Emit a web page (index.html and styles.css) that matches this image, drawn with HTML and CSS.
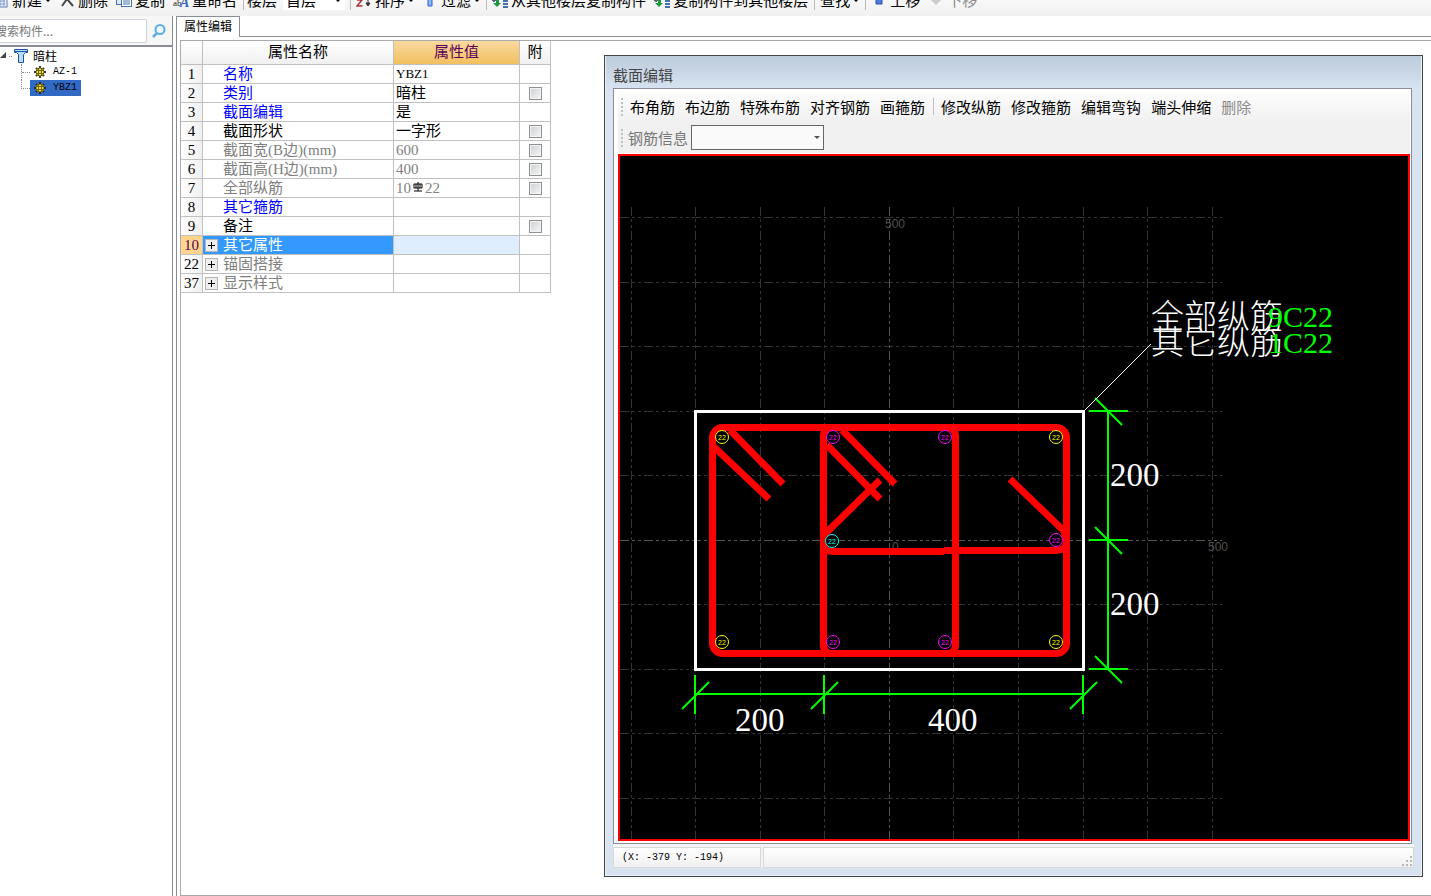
FILE: index.html
```html
<!DOCTYPE html>
<html lang="zh-CN">
<head>
  <meta charset="UTF-8" />
  <title>属性编辑</title>
  <link rel="stylesheet" href="styles.css">
</head>
<body>
  <div class="toolbar">
    <button class="tool">
      <svg class="icon" viewBox="0 0 16 16"><rect x="1" y="0" width="13" height="15" fill="#eaf1fb" stroke="#5b7fb5"/><path d="M3 5h9M3 9h9M3 12h9M7 3v11M11 3v11" stroke="#7b9acb"/></svg>
      新建<span class="arrow"></span>
    </button>
    <button class="tool">
      <svg class="icon" viewBox="0 0 16 16"><path d="M6 3l2 5M11 3L8 8M8 7l-5 7M8 7l6 7" stroke="#4a4a4a" stroke-width="2" fill="none"/></svg>
      删除
    </button>
    <button class="tool">
      <svg class="icon" viewBox="0 0 16 16"><rect x="0.500" y="1.500" width="9" height="11" fill="#dce9fa" stroke="#4772b3"/><rect x="5.500" y="4.500" width="10" height="10" fill="#fff" stroke="#4772b3"/><path d="M7 8h7M7 10h7M7 12h7" stroke="#4772b3"/></svg>
      复制
    </button>
    <button class="tool">
      <svg class="icon" viewBox="0 0 16 16"><text x="0" y="14" font-size="9" font-family="Liberation Serif" fill="#222">ab</text><text x="7" y="15" font-size="14" font-style="italic" font-weight="bold" font-family="Liberation Serif" fill="#3a66c4">A</text></svg>
      重命名
    </button>
    <span class="sep"></span>
    <label class="floor" for="floor">楼层</label>
    <span class="floor-box">
      <select id="floor"><option>首层</option></select><span class="arrow"></span>
    </span>
    <span class="sep"></span>
    <button class="tool">
      <svg class="icon" viewBox="0 0 16 16"><path d="M1 8h5l-5 6h5.500" stroke="#a33" stroke-width="1.500" fill="none"/><path d="M12 2v11M10 11l2 3 2-3z" stroke="#333" fill="#333"/></svg>
      排序<span class="arrow"></span>
    </button>
    <button class="tool">
      <svg class="icon" viewBox="0 0 16 16"><path d="M1 1h14l-5 5v8H6V6z" fill="#8db8f5" stroke="#2d5fd0"/></svg>
      过滤<span class="arrow"></span>
    </button>
    <span class="sep"></span>
    <button class="tool">
      <svg class="icon" viewBox="0 0 16 16"><path d="M0 8h7M2 4v6" stroke="#567" stroke-width="2"/><path d="M4 8h3v3h2l-4 4-4-4h3z" fill="#1a9a3c"/><path d="M11 3h5M11 6h5M11 9h5M11 12h5M11 15h5" stroke="#4470b0" stroke-width="2"/></svg>
      从其他楼层复制构件
    </button>
    <button class="tool">
      <svg class="icon" viewBox="0 0 16 16"><path d="M0 8h7M2 4v6" stroke="#567" stroke-width="2"/><path d="M4 8h3v3h2l-4 4-4-4h3z" fill="#1a9a3c"/><path d="M11 3h5M11 6h5M11 9h5M11 12h5M11 15h5" stroke="#4470b0" stroke-width="2"/></svg>
      复制构件到其他楼层
    </button>
    <span class="sep"></span>
    <button class="tool">查找<span class="arrow"></span></button>
    <span class="sep"></span>
    <button class="tool">
      <svg class="icon" viewBox="0 0 16 16"><path d="M8 0l6 6h-3v6H5V6H2z" fill="#4c7de0" stroke="#2b4fa8"/></svg>
      上移
    </button>
    <button class="tool" disabled>
      <svg class="icon" viewBox="0 0 16 16"><path d="M5 2h6v5h3l-6 6-6-6h3z" fill="#ccc"/></svg>
      下移
    </button>
  </div>

  <div class="workspace">
    <aside class="sidebar">
      <div class="search">
        <input type="text" placeholder="搜索构件..." aria-label="搜索构件">
        <button class="search-btn" aria-label="搜索">
          <svg width="14" height="14" viewBox="0 0 14 14" fill="none"><circle cx="8" cy="5.500" r="4.500" fill="#eef7fd" stroke="#5aaee6" stroke-width="2"/><path d="M5 9l-4 4" stroke="#5aaee6" stroke-width="2.500"/></svg>
        </button>
      </div>
      <div class="tree">
        <div class="tree-root">
          <svg width="33" height="16" viewBox="0 0 33 16"><path d="M6 4v6H0z" fill="#444"/><path d="M9 8.500h4" stroke="#888" stroke-dasharray="1 1"/><path d="M14.500 1.500h13v3h-2l-2 2v8h-5v-8l-2-2h-2z" fill="#b9dcfb" stroke="#1f55a8"/><path d="M15 3.500h12" stroke="#1f55a8"/></svg>
          暗柱
        </div>
        <ul>
          <li><a href="#az1">
            <svg width="12" height="12" viewBox="0 0 12 12"><path d="M6 0v12M0 6h12M2 2l8 8M10 2l-8 8" stroke="#333" stroke-width="2"/><circle cx="6" cy="6" r="4" fill="#fbe93a" stroke="#6b6312"/><path d="M4.500 3v6M7.500 3v6M3 4.500h6M3 7.500h6" stroke="#6b6312"/></svg>
            <span>AZ-1</span></a></li>
          <li><a href="#ybz1" class="selected">
            <svg width="12" height="12" viewBox="0 0 12 12"><path d="M6 0v12M0 6h12M2 2l8 8M10 2l-8 8" stroke="#222" stroke-width="2"/><circle cx="6" cy="6" r="4" fill="#fbe93a" stroke="#6b6312"/><path d="M4.500 3v6M7.500 3v6M3 4.500h6M3 7.500h6" stroke="#6b6312"/></svg>
            <span>YBZ1</span></a></li>
        </ul>
      </div>
    </aside>

    <main class="main">
      <div class="tabs"><button class="tab">属性编辑</button></div>
      <div class="panel">
        <table class="props">
          <thead>
            <tr><th class="num"></th><th class="name">属性名称</th><th class="value active">属性值</th><th class="extra">附</th></tr>
          </thead>
          <tbody>
            <tr class="key"><th>1</th><td>名称</td><td class="code">YBZ1</td><td></td></tr>
            <tr class="key"><th>2</th><td>类别</td><td>暗柱</td><td><input type="checkbox" aria-label="附加 类别"></td></tr>
            <tr class="key"><th>3</th><td>截面编辑</td><td>是</td><td></td></tr>
            <tr><th>4</th><td>截面形状</td><td>一字形</td><td><input type="checkbox" aria-label="附加 截面形状"></td></tr>
            <tr class="dim"><th>5</th><td>截面宽(B边)(mm)</td><td>600</td><td><input type="checkbox" aria-label="附加 截面宽"></td></tr>
            <tr class="dim"><th>6</th><td>截面高(H边)(mm)</td><td>400</td><td><input type="checkbox" aria-label="附加 截面高"></td></tr>
            <tr class="dim"><th>7</th><td>全部纵筋</td><td>10<svg class="rebar" width="14" height="12" viewBox="0 0 14 12"><path d="M7 1v9M3 10h8M3 3h8v4H3zM5 3v4M9 3v4" stroke="#000" fill="none"/></svg>22</td><td><input type="checkbox" aria-label="附加 全部纵筋"></td></tr>
            <tr class="key"><th>8</th><td>其它箍筋</td><td></td><td></td></tr>
            <tr><th>9</th><td>备注</td><td></td><td><input type="checkbox" aria-label="附加 备注"></td></tr>
            <tr class="group current"><th>10</th><td><button class="plus" aria-label="展开"></button>其它属性</td><td></td><td></td></tr>
            <tr class="group dim"><th>22</th><td><button class="plus" aria-label="展开"></button>锚固搭接</td><td></td><td></td></tr>
            <tr class="group dim"><th>37</th><td><button class="plus" aria-label="展开"></button>显示样式</td><td></td><td></td></tr>
          </tbody>
        </table>

        <section class="window">
          <h1 class="title">截面编辑</h1>
          <div class="frame">
            <div class="bar">
              <span class="grip"></span>
              <button>布角筋</button>
              <button>布边筋</button>
              <button>特殊布筋</button>
              <button>对齐钢筋</button>
              <button>画箍筋</button>
              <span class="bar-sep"></span>
              <button>修改纵筋</button>
              <button>修改箍筋</button>
              <button>编辑弯钩</button>
              <button>端头伸缩</button>
              <button disabled>删除</button>
            </div>
            <div class="bar bar-info">
              <span class="grip"></span>
              <label for="rebarInfo">钢筋信息</label>
              <span class="info-box"><select id="rebarInfo" disabled><option></option></select><span class="arrow"></span></span>
            </div>
            <div class="canvas">
              <svg width="100%" height="100%">
                <!-- origin is the centre of the section -->
                <g transform="translate(269 384)">
                  <g class="grid">
                    <path d="M-257.500-333V300M-193.500-333V300M-128.500-333V300M-64.500-333V300M64.500-333V300M129.500-333V300M194.500-333V300M258.500-333V300M323.500-333V300"/>
                    <path d="M-269-322.500H333M-269-257.500H333M-269-193.500H333M-269-128.500H333M-269-64.500H333M-269 64.500H333M-269 129.500H333M-269 193.500H333M-269 258.500H333"/>
                    <path class="axis" d="M0.500-333V300M-269 0.500H333"/>
                  </g>
                  <g class="axis-label">
                    <text x="-4" y="-312">500</text>
                    <text x="3" y="11">0</text>
                    <text x="319" y="11">500</text>
                  </g>

                  <rect class="column" x="-193.500" y="-128.500" width="388" height="258"/>

                  <g class="stirrup">
                    <rect x="-176.500" y="-112.500" width="354" height="226" rx="10"/>
                    <rect x="-65.500" y="-112.500" width="132" height="226" rx="8"/>
                    <path d="M-176-94l56 53M-159-110l53 54"/>
                    <path d="M-62-95l53 54M-47-110l53 54"/>
                    <path d="M-9-60L-64-6Q-70 11.500-56 11.500H55"/>
                    <path d="M55 10.500H167Q178 10 177.500 0L175-9l-54-52"/>
                  </g>

                  <g class="bars yellow">
                    <circle cx="-167" cy="-103" r="6.500"/><text x="-167" y="-100">22</text>
                    <circle cx="167" cy="-103" r="6.500"/><text x="167" y="-100">22</text>
                    <circle cx="-167" cy="102" r="6.500"/><text x="-167" y="105">22</text>
                    <circle cx="167" cy="102" r="6.500"/><text x="167" y="105">22</text>
                  </g>
                  <g class="bars magenta">
                    <circle cx="-56" cy="-103" r="6.500"/><text x="-56" y="-100">22</text>
                    <circle cx="56" cy="-103" r="6.500"/><text x="56" y="-100">22</text>
                    <circle cx="167" cy="0" r="6.500"/><text x="167" y="3">22</text>
                    <circle cx="-56" cy="102" r="6.500"/><text x="-56" y="105">22</text>
                    <circle cx="56" cy="102" r="6.500"/><text x="56" y="105">22</text>
                  </g>
                  <g class="bars cyan">
                    <circle cx="-57" cy="1" r="6.500"/><text x="-57" y="4">22</text>
                  </g>

                  <g class="dims">
                    <path d="M219-129V129M200-129h39M200 0h39M200 129h39"/>
                    <path d="M206-142l27 27M206-13l27 27M206 116l27 27"/>
                    <path d="M-194 154H194M-194 135v39M-65 135v39M194 135v39"/>
                    <path d="M-207 169l27-27M-78 169l27-27M181 169l27-27"/>
                  </g>
                  <g class="dim-text">
                    <text x="221" y="-54">200</text>
                    <text x="221" y="75">200</text>
                    <text x="-154" y="191">200</text>
                    <text x="39" y="191">400</text>
                  </g>

                  <path class="leader" d="M195.500-129.500L262-196"/>
                  <g class="note">
                    <text x="262" y="-212">全部纵筋</text>
                    <text x="262" y="-186">其它纵筋</text>
                  </g>
                  <g class="note-value">
                    <text x="379" y="-213">9C22</text>
                    <text x="379" y="-187">1C22</text>
                  </g>
                </g>
              </svg>
            </div>
          </div>
          <footer class="status">
            <span class="coords">(X: -379 Y: -194)</span>
            <span class="rest"><svg width="11" height="11" viewBox="0 0 11 11"><path d="M8 0h2v2H8zM4 4h2v2H4zM8 4h2v2H8zM0 8h2v2H0zM4 8h2v2H4zM8 8h2v2H8z" fill="#b8b8b8"/></svg></span>
          </footer>
        </section>
      </div>
    </main>
  </div>
</body>
</html>
```

FILE: styles.css
```css
*, *::before {
  box-sizing: border-box;
}

body {
  margin: 0;
  height: 100vh;
  display: flex;
  flex-direction: column;
  overflow: hidden;
  background: #fff;
  color: #000;
  font-family: "Noto Sans CJK SC", sans-serif;
  font-size: 15px;
}

button, select, input {
  font: inherit;
  color: inherit;
  margin: 0;
  padding: 0;
  border: none;
  border-radius: 0;
  background: none;
}

button:disabled {
  color: #8a8a8a;
}

svg {
  display: block;
  flex: none;
}

.arrow {
  flex: none;
  border: 3px solid transparent;
  border-top-color: #000;
  border-bottom: none;
}

/* top toolbar, scrolled partly out of view */
.toolbar {
  height: 16px;
  flex: none;
  display: flex;
  align-items: flex-end;
  gap: 2px;
  margin-left: -10px;
  padding-bottom: 6px;
  overflow: hidden;
  background: linear-gradient(#f8f8f8, #f0f0f0);
  line-height: 20px;
  white-space: nowrap;
}

.tool {
  display: flex;
  align-items: center;
  gap: 3px;
  padding: 0 3px;
}

.icon {
  width: 16px;
  height: 16px;
}

.sep {
  width: 1px;
  height: 20px;
  flex: none;
  margin-left: 1px;
  background: #bbb;
}

.floor {
  margin-left: 1px;
}

.floor-box {
  display: flex;
  align-items: center;
  width: 62px;
  margin: 0 2px 0 4px;
  padding-right: 4px;
  background: #fff;
}

.floor-box select {
  flex: 1;
  appearance: none;
  padding-left: 3px;
  line-height: 20px;
}

.workspace {
  flex: 1;
  display: flex;
  min-height: 0;
}

/* left tree */
.sidebar {
  width: 173px;
  flex: none;
  display: flex;
  flex-direction: column;
  border-right: 1px solid #8c8c99;
}

.search {
  display: flex;
  align-items: center;
  height: 31px;
  background: #f6f6f6;
  border-bottom: 2px solid #8c8c99;
}

.search input {
  width: 153px;
  height: 24px;
  margin-left: -6px;
  background: #fff;
  border: 1px solid #cdd3da;
  border-radius: 2px;
  font-size: 12px;
}

.search input::placeholder {
  color: #777;
}

.search-btn {
  padding: 0 5px;
}

.tree {
  font-size: 12px;
  line-height: 16px;
  padding-top: 1px;
}

.tree-root {
  display: flex;
}

.tree ul {
  list-style: none;
  margin: 0;
  padding: 0 0 0 21px;
}

.tree li {
  display: flex;
  height: 16px;
}

.tree li::before {
  content: "";
  width: 9px;
  height: 9px;
  border-left: 1px dotted #888;
  border-bottom: 1px dotted #888;
}

.tree li:first-child {
  border-left: 1px dotted #888;
}

.tree li:first-child::before {
  width: 8px;
  border-left: none;
}

.tree a {
  display: flex;
  align-items: center;
  gap: 7px;
  padding: 0 4px;
  color: #000;
  text-decoration: none;
  font-family: "Liberation Mono", monospace;
  font-size: 10px;
}

.tree .selected {
  background: #316ac5;
}

/* property editor */
.main {
  flex: 1;
  min-width: 0;
  display: flex;
  flex-direction: column;
  margin-left: 3px;
  border-left: 1px solid #8c8c99;
}

.tabs {
  height: 21px;
  display: flex;
  border-bottom: 1px solid #8c8c99;
}

.tab {
  height: 21px;
  padding: 0 7px 2px;
  background: #fff;
  border-top: 1px solid #8c8c99;
  border-right: 1px solid #8c8c99;
  font-size: 12px;
  line-height: 18px;
}

.panel {
  flex: 1;
  min-height: 0;
  display: flex;
  align-items: flex-start;
  margin: 3px 0 0 3px;
  border: 1px solid #aaa;
  border-right: none;
}

.props {
  width: 370px;
  flex: none;
  table-layout: fixed;
  border-collapse: separate;
  border-spacing: 0;
  font-family: "Liberation Serif", "Noto Sans CJK SC", serif;
  line-height: 18px;
}

.props th, .props td {
  height: 19px;
  padding: 0;
  border-right: 1px solid #c0c0c0;
  border-bottom: 1px solid #c0c0c0;
  font-weight: normal;
  text-align: left;
  white-space: nowrap;
}

.props thead th {
  height: 24px;
  padding-bottom: 2px;
  text-align: center;
  background: linear-gradient(#fff, #f0f0f0);
}

.props .num { width: 22px; }
.props .name { width: 191px; }
.props .value { width: 126px; }
.props .extra { width: 31px; }

.props thead .active {
  background: linear-gradient(#f9d99f, #f1c05f);
  color: #5a005a;
}

.props tbody th {
  text-align: center;
  background: linear-gradient(90deg, #fff, #f0f0f0);
}

.props td:nth-child(2) {
  padding-left: 20px;
}

.props td:nth-child(3) {
  padding-left: 2px;
}

.key td:nth-child(2) {
  color: #00f;
}

.dim td {
  color: #808080;
}

.props .code {
  font-size: 13px;
}

.rebar {
  display: inline-block;
}

.props input {
  appearance: none;
  display: block;
  width: 13px;
  height: 13px;
  margin: 0 auto;
  border: 1px solid #8e8f8f;
  background: linear-gradient(135deg, #ccd0d5, #f6f6f6);
  box-shadow: inset 0 0 0 1px #f4f4f4;
}

.props .group td:nth-child(2) {
  padding-left: 2px;
}

.plus {
  width: 13px;
  height: 13px;
  margin-right: 5px;
  vertical-align: -1px;
  border: 1px solid #b5b5b5;
  background:
    linear-gradient(#000, #000) center / 7px 1px no-repeat,
    linear-gradient(#000, #000) center / 1px 7px no-repeat,
    #eee;
}

.props .current th {
  background: #ffd58d;
  color: #5a005a;
}

.current td:nth-child(2) {
  background: #3399ff;
  color: #fff;
}

.current td:nth-child(3) {
  background: #deeeff;
}

/* section editor window */
.window {
  flex: 1;
  min-width: 0;
  align-self: stretch;
  display: flex;
  flex-direction: column;
  margin: 14px 8px 18px 53px;
  padding: 0 8px 8px;
  border: 1px solid #444;
  background: #d7e3f1;
  box-shadow: inset 0 0 0 1px #e9f1f9;
}

.title {
  margin: 0 -7px;
  padding: 8px 7px 0;
  height: 32px;
  flex: none;
  background: linear-gradient(#bccbdb, #d6e2f0);
  color: #444;
  font-size: 15px;
  font-weight: normal;
  line-height: 22px;
}

.frame {
  flex: 1;
  min-height: 0;
  display: flex;
  flex-direction: column;
  margin-right: 2px;
  padding: 2px 1px 2px 4px;
  background: #fff;
  border: 1px solid #8c8c99;
}

.bar {
  display: flex;
  align-items: center;
  gap: 10px;
  height: 31px;
  flex: none;
  padding-left: 3px;
  background: linear-gradient(#fdfdfd, #f0f0f0);
  white-space: nowrap;
}

.grip {
  width: 2px;
  height: 18px;
  margin-right: -3px;
  background: repeating-linear-gradient(#c0c0c0 0 2px, transparent 2px 4px);
}

.bar-sep {
  width: 1px;
  height: 17px;
  margin: 0 -3px 0 -2px;
  background: #c0c0c0;
}

.bar-info {
  gap: 3px;
  background: #f0f0f0;
  color: #777;
}

.bar-info .grip {
  margin-right: 2px;
}

.info-box {
  display: flex;
  align-items: center;
  width: 133px;
  height: 25px;
  padding-right: 3px;
  border: 1px solid #666;
  background: #fafafa;
}

.info-box select {
  flex: 1;
  appearance: none;
}

.info-box .arrow {
  border-top-color: #555;
}

.canvas {
  flex: 1;
  min-height: 0;
  margin-top: 1px;
  overflow: hidden;
  background: #000;
  border: 2px solid #f00;
}

.grid path {
  fill: none;
  stroke: #333;
  stroke-dasharray: 9 3 3 3 3 3;
}

.grid .axis {
  stroke: #555;
}

.axis-label {
  fill: #505050;
  font: 12px "Liberation Sans", sans-serif;
}

.column {
  fill: none;
  stroke: #fff;
  stroke-width: 3;
}

.stirrup {
  fill: none;
  stroke: #f00;
  stroke-width: 7;
}

.bars {
  font: 7px "Liberation Sans", sans-serif;
  text-anchor: middle;
}

.bars circle {
  fill: #000;
}

.yellow { stroke: #ff0; }
.magenta { stroke: #f0f; }
.cyan { stroke: #0ff; }

.bars text { stroke: none; }
.yellow text { fill: #ff0; }
.magenta text { fill: #f0f; }
.cyan text { fill: #0ff; }

.dims {
  fill: none;
  stroke: #0f0;
  stroke-width: 2;
}

.dim-text {
  fill: #fff;
  font: 33px "Liberation Serif", serif;
}

.leader {
  stroke: #fff;
}

.note {
  fill: #fff;
  font: 300 33px "Noto Sans CJK SC", sans-serif;
}

.note-value {
  fill: #0f0;
  font: 30px "Liberation Serif", serif;
}

.status {
  display: flex;
  gap: 2px;
  height: 24px;
  flex: none;
  padding-top: 3px;
  background: #f4f4f4;
}

.coords, .rest {
  border: 1px solid #d8d8d8;
  background: linear-gradient(#fff, #f0f0f0);
}

.coords {
  width: 148px;
  padding-left: 8px;
  font: 10px/19px "Liberation Mono", monospace;
}

.rest {
  flex: 1;
  display: flex;
  justify-content: flex-end;
  align-items: flex-end;
}
```
